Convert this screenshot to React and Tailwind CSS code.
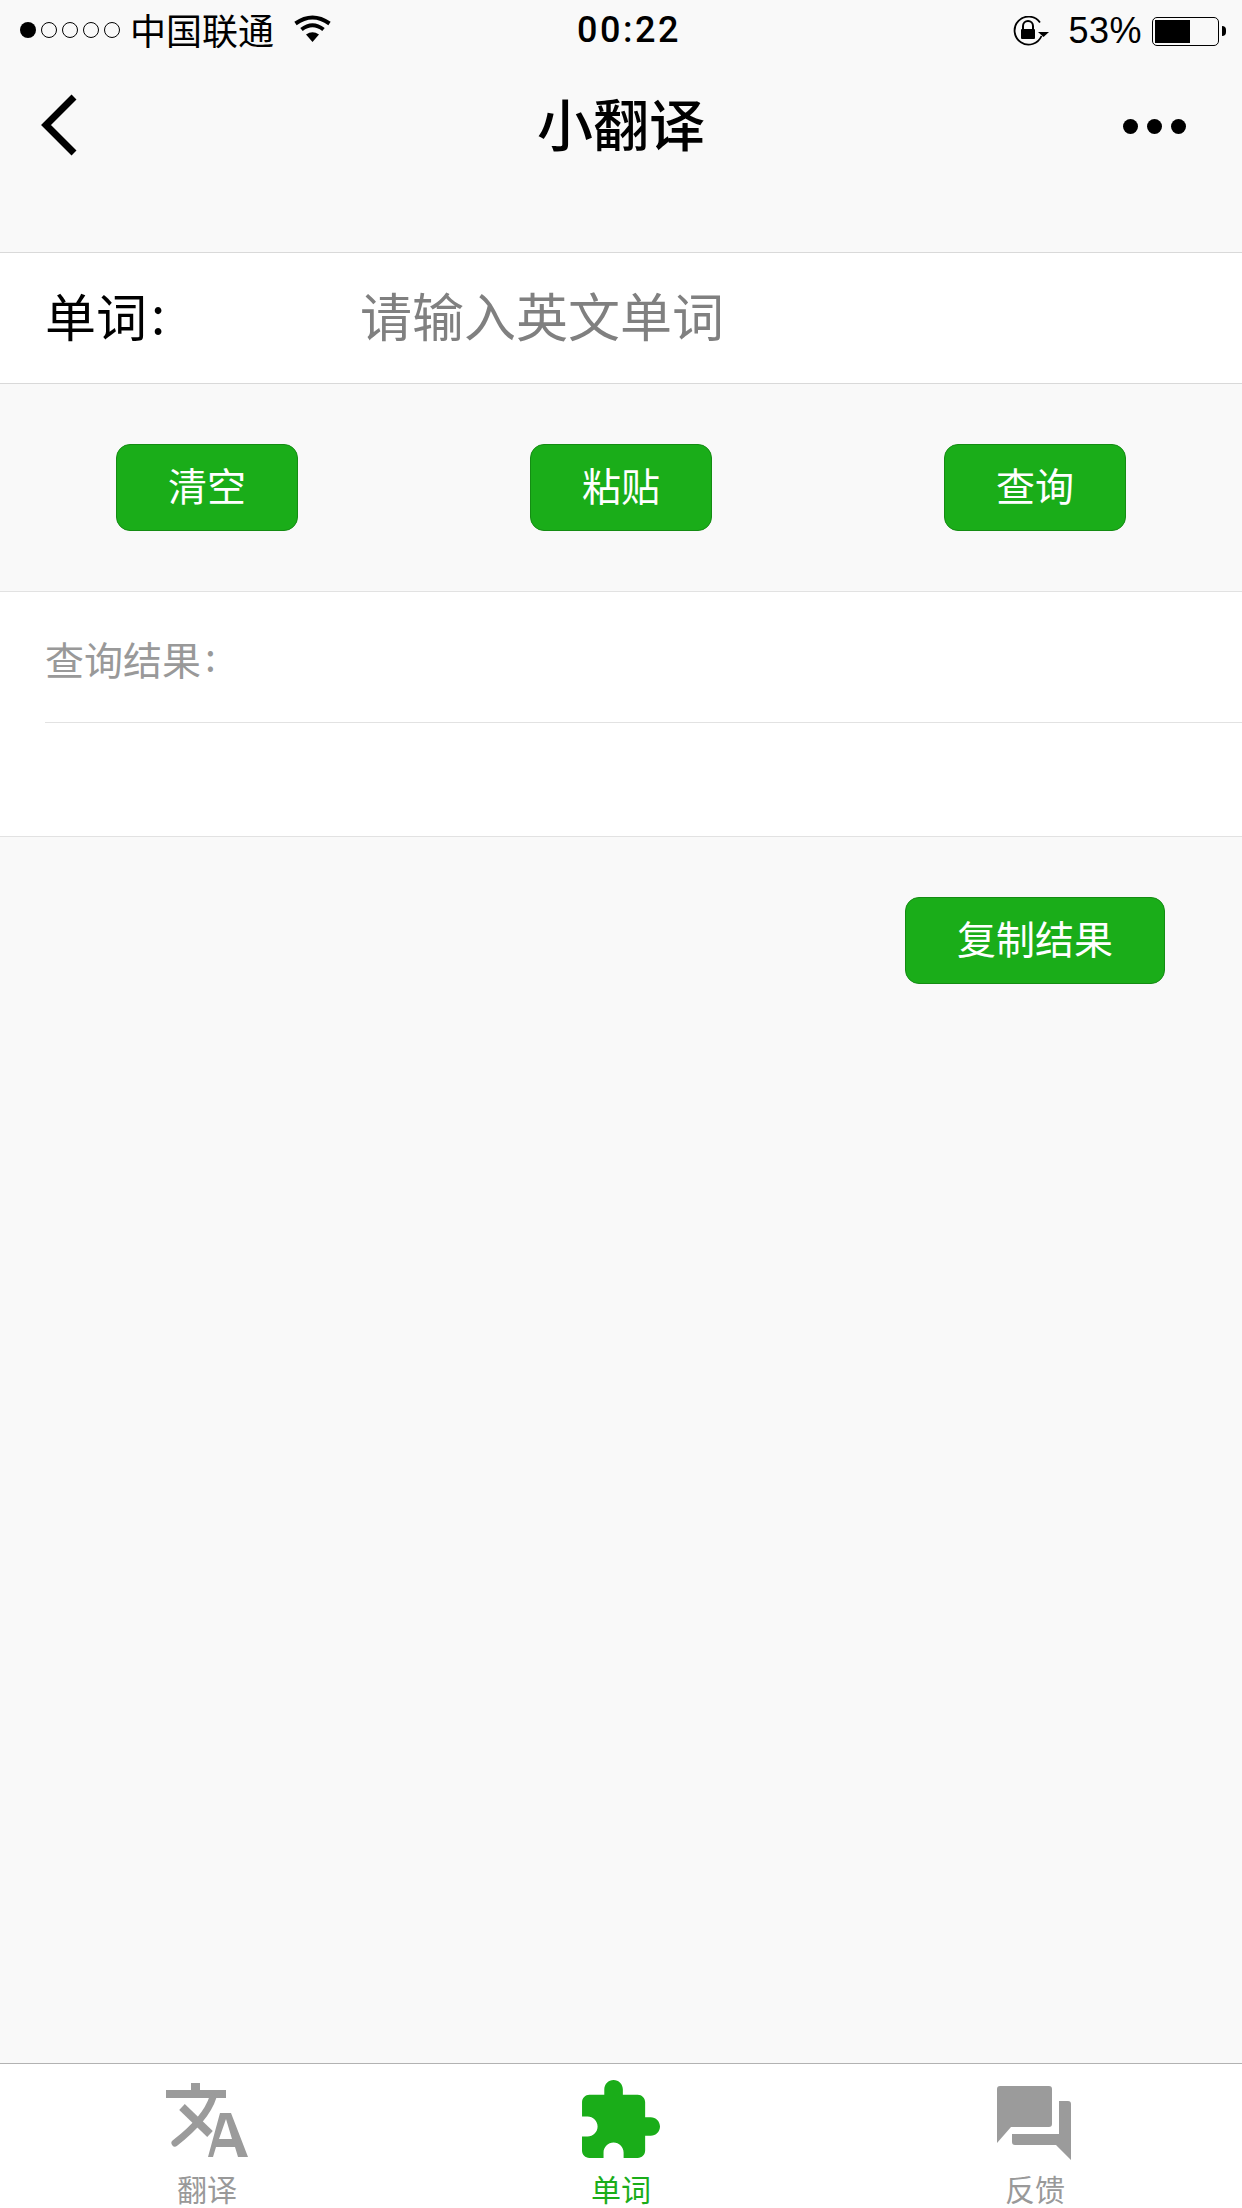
import React from 'react';

const StatusBar = () => (
  <div className="flex h-[62px] items-center justify-between pl-5 pr-[16px] text-black">
    <div className="flex items-center">
      <div className="mb-[2px] flex items-center gap-[5px]">
        <span className="h-4 w-4 rounded-full bg-black" />
        {[0, 1, 2, 3].map((i) => (
          <span key={i} className="h-4 w-4 rounded-full border border-black" />
        ))}
      </div>
      <span className="mb-[5px] ml-[10px] text-[36px] leading-[40px]">中国联通</span>
      <svg className="mb-[6px] ml-[20px]" width="37" height="27" viewBox="0 0 37 27">
        <path d="M1.5 8.5Q18.5 -3.5 35.5 8.5" fill="none" stroke="#000" strokeWidth="4" />
        <path d="M7.5 14.5Q18.5 6 29.5 14.5" fill="none" stroke="#000" strokeWidth="4" />
        <path d="M12 19.5Q18.5 15 25 19.5L18.5 27Z" fill="#000" />
      </svg>
    </div>
    <div className="flex items-center">
      <svg width="36" height="30" viewBox="0 0 36 30">
        <path d="M27 6.5A14 14 0 1 0 28.5 20" fill="none" stroke="#000" strokeWidth="1.8" />
        <path d="M25 16L36 16L30.5 21Z" fill="#000" />
        <path d="M10 13V10a5 5 0 0 1 10 0v3" fill="none" stroke="#000" strokeWidth="2" />
        <rect x="8" y="13" width="14" height="10" rx="1" fill="#000" />
      </svg>
      <span className="ml-[19px] text-[36px] leading-[40px] tracking-[0.5px] [font-family:'Liberation_Sans',sans-serif]">53%</span>
      <div className="ml-[10px] h-[29px] w-[67px] rounded-[5px] border border-black p-[2px]">
        <div className="h-full w-[35px] bg-black" />
      </div>
      <span className="ml-[3px] h-[10px] w-[4px] rounded-r-full bg-black" />
    </div>
  </div>
);

const ActionButton = ({ label, wide }) => (
  <button className={`h-[87px] rounded-[14px] border border-[#148c13] bg-[#1aad19] pb-[7px] text-[39px] text-white ${wide ? 'w-[260px]' : 'w-[182px]'}`}>
    {label}
  </button>
);

const Colon = () => (
  <span className="ml-[4px] inline-block -translate-y-[3px]">:</span>
);

const TranslateIcon = () => (
  <svg width="82" height="77" viewBox="0 0 82 77" fill="#9b9b9b">
    <path d="M0 7H25V0H34V7H60V15H0Z" />
    <path d="M47 14Q40 36 9 60" fill="none" stroke="#9b9b9b" strokeWidth="7" strokeLinecap="round" />
    <path d="M16 24L44 51" fill="none" stroke="#9b9b9b" strokeWidth="8" />
    <path fillRule="evenodd" d="M42 74L54 30H65L82 74H72L69 64H50L47 74ZM53 56H66L60 36Z" />
  </svg>
);

const PuzzleIcon = () => (
  <svg className="-mt-[3px]" width="78" height="78" viewBox="2 1 21 21" fill="#1aad19">
    <path d="M20.5 11H19V7c0-1.1-.9-2-2-2h-4V3.5C13 2.12 11.88 1 10.5 1S8 2.12 8 3.5V5H4c-1.1 0-1.99.9-1.99 2v3.8H3.5c1.49 0 2.7 1.21 2.7 2.7s-1.21 2.7-2.7 2.7H2V20c0 1.1.9 2 2 2h3.8v-1.5c0-1.49 1.21-2.7 2.7-2.7 1.49 0 2.7 1.21 2.7 2.7V22H17c1.1 0 2-.9 2-2v-4h1.5c1.38 0 2.5-1.12 2.5-2.5S21.88 11 20.5 11z" />
  </svg>
);

const ForumIcon = () => (
  <svg className="mt-[3px]" width="76" height="74" viewBox="0 0 76 74" fill="#9b9b9b">
    <path d="M3 0H52a3 3 0 0 1 3 3V38a3 3 0 0 1-3 3H14L0 57V3a3 3 0 0 1 3-3Z" />
    <path d="M62 15H71a3 3 0 0 1 3 3V74L59 59H18a3 3 0 0 1-3-3V48H62Z" />
  </svg>
);

const tabs = [
  { label: '翻译', icon: <TranslateIcon />, active: false },
  { label: '单词', icon: <PuzzleIcon />, active: true },
  { label: '反馈', icon: <ForumIcon />, active: false },
];

export default function App() {
  return (
    <div className="flex h-[2208px] w-[1242px] flex-col overflow-hidden bg-[#f9f9f9] [font-family:'Noto_Sans_CJK_SC','Liberation_Sans',sans-serif]">
      <div className="relative">
        <StatusBar />
        {/* time sits centred over the status bar */}
        <span className="absolute left-[577px] top-[10px] text-[36px] font-medium leading-[40px] tracking-[2.5px] [font-family:Roboto,sans-serif]">00:22</span>
      </div>

      {/* Nav */}
      <div className="mb-[64px] grid h-[126px] grid-cols-3 items-center">
        <div className="pl-[40px]">
          <svg width="40" height="62" viewBox="0 0 40 62">
            <path d="M34 3L6 31L34 59" fill="none" stroke="#000" strokeWidth="7" />
          </svg>
        </div>
        <h1 className="pb-[6px] text-center text-[56px] font-medium leading-[70px] text-black">小翻译</h1>
        <div className="flex justify-end gap-[9px] pr-[56px] pt-[2px]">
          {[0, 1, 2].map((i) => (
            <span key={i} className="h-[15px] w-[15px] rounded-full bg-black" />
          ))}
        </div>
      </div>

      {/* Word input */}
      <div className="flex h-[132px] items-center border-y border-[#d9d9d9] bg-white pb-[6px] pl-[45px]">
        <label className="w-[315px] text-[51px] leading-[60px] text-black">单词<Colon /></label>
        <input
          readOnly
          placeholder="请输入英文单词"
          className="w-[800px] bg-transparent text-[52px] leading-[60px] outline-none placeholder:text-[#808080]"
        />
      </div>

      <div className="grid grid-cols-3 justify-items-center py-[60px]">
        <ActionButton label="清空" />
        <ActionButton label="粘贴" />
        <ActionButton label="查询" />
      </div>

      {/* Result */}
      <div className="border-y border-[#e2e2e2] bg-white pl-[45px]">
        <div className="flex h-[131px] items-center border-b border-[#e2e2e2] pt-[3px] text-[39px] text-[#999]">
          <span>查询结果<Colon /></span>
        </div>
        <div className="h-[113px]" />
      </div>

      <div className="grid flex-1 grid-cols-3 justify-items-center pt-[60px]">
        <div className="col-start-3">
          <ActionButton label="复制结果" wide />
        </div>
      </div>

      {/* Tab bar */}
      <div className="grid h-[145px] grid-cols-3 border-t border-[#b2b2b2] bg-white pt-[19px]">
        {tabs.map((tab) => (
          <div key={tab.label} className="flex flex-col items-center">
            <div className="flex h-[87px] items-start justify-center">{tab.icon}</div>
            <span className={`text-[30px] leading-[36px] ${tab.active ? 'text-[#1aad19]' : 'text-[#999]'}`}>{tab.label}</span>
          </div>
        ))}
      </div>
    </div>
  );
}
